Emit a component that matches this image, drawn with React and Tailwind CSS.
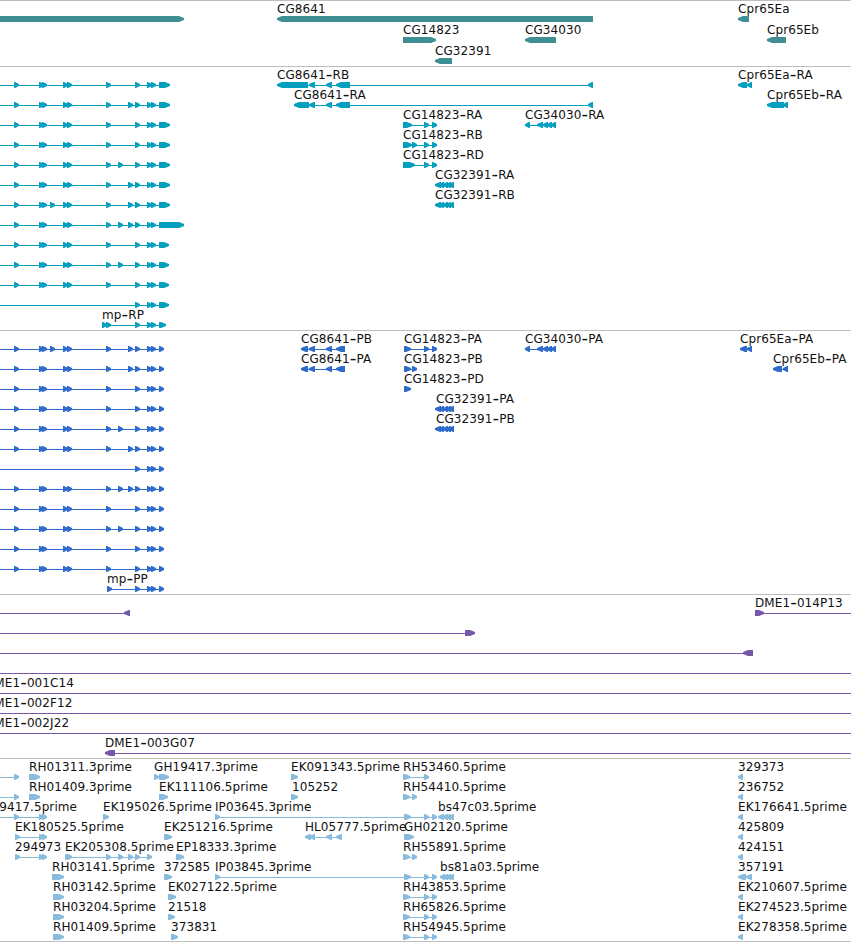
import React from 'react';

const WIDTH = 851;

// exons of the mp transcripts, shared by most rows
const A = [[14, 19], [39, 44], [42, 47]];
const B = [[63, 68], [67, 72], [106, 111]];
const C = [[135, 140], [147, 152], [151, 156]];
const E50 = [50, 55];
const E118 = [118, 123];
const E128 = [128, 133];

const mp = (extra, last) => ({ from: -10, exons: [...A, ...B, ...extra, ...C, last] });
const fwd = (label, x, exons) => ({ label, x, exons });
const rev = (label, x, exons) => ({ label, x, exons, reverse: true });

const cg34030 = [[525, 530], [537, 543], [543, 548], [547, 552], [551, 556]];
const cg32391 = [[435, 441], [439, 444], [443, 448], [446, 451], [449, 454]];
const cg8641p = [[301, 308], [309, 315], [326, 332], [336, 345]];
const ip = [[215, 220], [404, 411], [424, 429], [432, 437]];
const rh = [[403, 410], [424, 429], [432, 437]];
const rhShort = [[403, 410], [412, 417]];
const tip738 = [[738, 743]];

const tracks = [
    {
        name: 'genes',
        color: 'text-[#3f8e94]',
        height: 'h-[66px]',
        row: 'h-[21px]',
        rows: [
            [{ from: -10, exons: [[-10, 184]] }, rev('CG8641', 277, [[277, 593]]), rev('Cpr65Ea', 738, [[738, 749]])],
            [fwd('CG14823', 403, [[403, 436]]), rev('CG34030', 525, [[525, 556]]), rev('Cpr65Eb', 767, [[767, 786]])],
            [rev('CG32391', 435, [[435, 452]])],
        ],
    },
    {
        name: 'transcripts',
        color: 'text-[#049fbf]',
        height: 'h-[264px]',
        row: 'h-5',
        rows: [
            [
                mp([], [159, 170]),
                rev('CG8641-RB', 277, [[277, 308], [309, 315], [326, 332], [336, 350], [588, 593]]),
                rev('Cpr65Ea-RA', 738, [[738, 747], [747, 752]]),
            ],
            [
                mp([E128], [159, 170]),
                rev('CG8641-RA', 294, [[294, 309], [309, 315], [326, 332], [336, 350], [588, 593]]),
                rev('Cpr65Eb-RA', 767, [[767, 784], [783, 788]]),
            ],
            [mp([], [159, 170]), fwd('CG14823-RA', 403, [[403, 412], [424, 429], [432, 437]]), rev('CG34030-RA', 525, cg34030)],
            [mp([], [159, 170]), fwd('CG14823-RB', 403, [[403, 412], [412, 417], [424, 429], [432, 437]])],
            [mp([E118], [159, 170]), fwd('CG14823-RD', 403, [[403, 415], [424, 429], [432, 437]])],
            [mp([E128], [159, 170]), rev('CG32391-RA', 435, cg32391)],
            [mp([E50, E128], [159, 170]), rev('CG32391-RB', 435, cg32391)],
            [mp([E118, E128], [159, 184])],
            [mp([], [159, 169])],
            [mp([E118], [159, 169])],
            [mp([], [159, 169])],
            [{ from: -10, exons: [...C, [159, 169]] }],
            [fwd('mp-RP', 102, [[102, 107], [106, 111], ...C, [159, 166]])],
        ],
    },
    {
        name: 'proteins',
        color: 'text-[#2f6bca]',
        height: 'h-[264px]',
        row: 'h-5',
        rows: [
            [
                mp([E50, E128], [159, 164]),
                rev('CG8641-PB', 301, cg8641p),
                fwd('CG14823-PA', 404, [[404, 411], [424, 429], [432, 437]]),
                rev('CG34030-PA', 525, cg34030),
                rev('Cpr65Ea-PA', 740, [[740, 747], [747, 752]]),
            ],
            [
                mp([E128], [159, 164]),
                rev('CG8641-PA', 301, cg8641p),
                fwd('CG14823-PB', 404, [[404, 411], [412, 417]]),
                rev('Cpr65Eb-PA', 773, [[773, 782], [783, 788]]),
            ],
            [mp([], [159, 164]), fwd('CG14823-PD', 404, [[404, 411]])],
            [mp([], [159, 164]), rev('CG32391-PA', 436, cg32391)],
            [mp([E118], [159, 164]), rev('CG32391-PB', 436, cg32391)],
            [mp([E128], [159, 164])],
            [{ from: -10, exons: [...C, [159, 164]] }],
            [mp([E118, E128], [159, 164])],
            [mp([], [159, 164])],
            [mp([E118], [159, 164])],
            [mp([], [159, 164])],
            [mp([], [159, 164])],
            [fwd('mp-PP', 107, [[107, 112], ...C, [159, 164]])],
        ],
    },
    {
        name: 'bacs',
        color: 'text-[#7658a8]',
        height: 'h-[164px]',
        row: 'h-5',
        rows: [
            [{ from: -10, exons: [[124, 130]], reverse: true }, { label: 'DME1-014P13', x: 755, exons: [[755, 764]], to: WIDTH }],
            [{ from: -10, exons: [[465, 475]] }],
            [{ from: -10, exons: [[743, 753]], reverse: true }],
            [{ from: -10, to: WIDTH, exons: [] }],
            [{ label: 'DME1-001C14', x: -15, from: -10, to: WIDTH, exons: [] }],
            [{ label: 'DME1-002F12', x: -15, from: -10, to: WIDTH, exons: [] }],
            [{ label: 'DME1-002J22', x: -15, from: -10, to: WIDTH, exons: [] }],
            [{ label: 'DME1-003G07', x: 105, exons: [[105, 115]], to: WIDTH, reverse: true }],
        ],
    },
    {
        name: 'ests',
        color: 'text-[#88bbdc]',
        height: 'h-[183px]',
        row: 'h-5',
        rows: [
            [
                { from: -10, exons: [[14, 19]] },
                fwd('RH01311.3prime', 29, [[29, 40]]),
                fwd('GH19417.3prime', 154, [[154, 159], [159, 169]]),
                fwd('EK091343.5prime', 291, [[291, 298]]),
                fwd('RH53460.5prime', 403, [[403, 410], [424, 429]]),
                rev('329373', 738, tip738),
            ],
            [
                { from: -10, exons: [[14, 19]] },
                fwd('RH01409.3prime', 29, [[29, 40]]),
                fwd('EK111106.5prime', 159, [[159, 168]]),
                fwd('105252', 292, [[291, 298]]),
                fwd('RH54410.5prime', 403, rhShort),
                rev('236752', 738, tip738),
            ],
            [
                { label: 'GH19417.5prime', x: -27, from: -10, exons: A },
                fwd('EK195026.5prime', 103, [[103, 109]]),
                fwd('IP03645.3prime', 215, ip),
                rev('bs47c03.5prime', 438, [[438, 444], ...cg32391.slice(2)]),
                rev('EK176641.5prime', 738, tip738),
            ],
            [
                fwd('EK180525.5prime', 15, [[15, 20], [39, 44], [42, 47]]),
                fwd('EK251216.5prime', 164, [[164, 172]]),
                rev('HL05777.5prime', 305, [[305, 311], [310, 315], [326, 332], [336, 342]]),
                fwd('GH02120.5prime', 404, [[404, 414]]),
                rev('425809', 738, tip738),
            ],
            [
                fwd('294973', 15, [[15, 20], [39, 44], [42, 47]]),
                fwd('EK205308.5prime', 65, [[65, 70], [67, 72], [106, 111], E118, E128, [135, 140], [147, 152]]),
                fwd('EP18333.3prime', 176, [[176, 184]]),
                fwd('RH55891.5prime', 403, rhShort),
                rev('424151', 738, tip738),
            ],
            [
                fwd('RH03141.5prime', 52, [[52, 64]]),
                fwd('372585', 164, [[164, 172]]),
                fwd('IP03845.3prime', 215, ip),
                rev('bs81a03.5prime', 440, [[440, 445], ...cg32391.slice(2)]),
                rev('357191', 738, [[738, 746], [746, 752]]),
            ],
            [
                fwd('RH03142.5prime', 53, [[53, 64]]),
                fwd('EK027122.5prime', 168, [[168, 176]]),
                fwd('RH43853.5prime', 403, rh),
                rev('EK210607.5prime', 738, tip738),
            ],
            [
                fwd('RH03204.5prime', 53, [[53, 64]]),
                fwd('21518', 168, [[168, 175]]),
                fwd('RH65826.5prime', 403, rh),
                rev('EK274523.5prime', 738, tip738),
            ],
            [
                fwd('RH01409.5prime', 53, [[53, 64]]),
                fwd('373831', 171, [[171, 178]]),
                fwd('RH54945.5prime', 403, rh),
                rev('EK278358.5prime', 738, tip738),
            ],
        ],
    },
];

// a bar that narrows to a point at its 3' end
const Exon = ({ x1, x2, reverse }) => {
    const tip = Math.min(5, x2 - x1 - 1);
    const points = reverse
        ? `${x2},14 ${x1 + tip},14 ${x1},16 ${x1},18 ${x1 + tip},20 ${x2},20`
        : `${x1},14 ${x2 - tip},14 ${x2},16 ${x2},18 ${x2 - tip},20 ${x1},20`;
    return <polygon points={points} fill="currentColor" />;
};

const Label = ({ x, text }) => {
    const [head, tail] = text.split('-');
    return (
        <text x={x} y="11" fontSize="12" className="fill-[#111] tracking-[0.08px]">
            {head}
            {tail && <tspan fontSize="18.5" dy="1">-</tspan>}
            {tail && <tspan dy="-1">{tail}</tspan>}
        </text>
    );
};

const Feature = ({ label, x, from, to, exons, reverse }) => {
    const start = from ?? exons[0][0];
    const end = to ?? exons[exons.length - 1][1];
    return (
        <g>
            {label && <Label x={x} text={label} />}
            <rect x={start} y="17" width={end - start} height="1" fill="currentColor" />
            {exons.map(([x1, x2]) => (
                <Exon key={x1} x1={x1} x2={x2} reverse={reverse} />
            ))}
        </g>
    );
};

const Track = ({ track }) => (
    <section className={`${track.height} ${track.color} border-t border-[#bebebe] pt-px`}>
        {track.rows.map((features, i) => (
            <div key={i} className={track.row}>
                <svg width={WIDTH} height="20" className="block overflow-visible">
                    {features.map((feature, j) => (
                        <Feature key={j} {...feature} />
                    ))}
                </svg>
            </div>
        ))}
    </section>
);

const App = () => {
    return (
        <main className="w-[851px] h-[942px] overflow-hidden bg-white border-b border-[#bebebe] font-['DejaVu_Sans',sans-serif]">
            {tracks.map((track) => (
                <Track key={track.name} track={track} />
            ))}
        </main>
    );
};

export default App;
